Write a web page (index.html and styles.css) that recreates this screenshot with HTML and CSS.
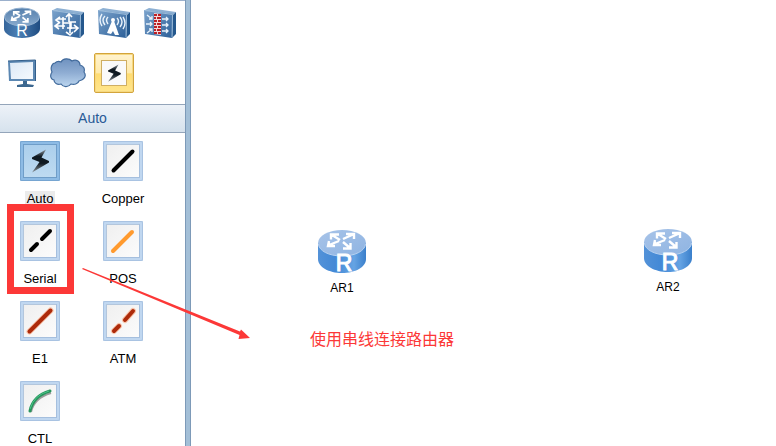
FILE: index.html
```html
<!DOCTYPE html>
<html lang="zh-CN">
<head>
<meta charset="utf-8">
<title>Network topology</title>
<link rel="stylesheet" href="styles.css">
</head>
<body>
<svg class="defs" aria-hidden="true">
  <defs>
    <linearGradient id="dark" x1="0" y1="0" x2="1" y2="1"><stop offset="0" stop-color="#7ba3cc"/><stop offset="1" stop-color="#2c5f98"/></linearGradient>
    <linearGradient id="darkBody" x1="0" y1="0" x2="1" y2="0"><stop offset="0" stop-color="#35659b"/><stop offset=".4" stop-color="#4c80b5"/><stop offset="1" stop-color="#1f4c81"/></linearGradient>
    <linearGradient id="darkTop" x1="0" y1="0" x2="0" y2="1"><stop offset="0" stop-color="#557fac"/><stop offset="1" stop-color="#89abce"/></linearGradient>
    <linearGradient id="body" x1="0" y1="0" x2="1" y2="0"><stop offset="0" stop-color="#5392d8"/><stop offset=".35" stop-color="#4389d6"/><stop offset=".75" stop-color="#65a3e3"/><stop offset="1" stop-color="#3a7fcb"/></linearGradient>
    <linearGradient id="top" x1="0" y1="0" x2="1" y2="1"><stop offset="0" stop-color="#a7c3e8"/><stop offset="1" stop-color="#8fb4e2"/></linearGradient>
    <linearGradient id="cloud" x1="0" y1="0" x2="0" y2="1"><stop offset="0" stop-color="#6f92bf"/><stop offset=".5" stop-color="#8fadd3"/><stop offset="1" stop-color="#bcd6ef"/></linearGradient>
    <linearGradient id="screen" x1="0" y1="0" x2="1" y2="1"><stop offset="0" stop-color="#dce9f7"/><stop offset="1" stop-color="#f5f9fd"/></linearGradient>
    <linearGradient id="bolt" x1="0" y1="0" x2="0" y2="1"><stop offset="0" stop-color="#8b949b"/><stop offset=".3" stop-color="#101a22"/><stop offset=".6" stop-color="#101a22"/><stop offset="1" stop-color="#8b949b"/></linearGradient>
    <symbol id="arrows" viewBox="8 2 30 18">
      <path d="M22 10 14 5M13 9.500V4.500H21M25 9 35 4.500M28 4H36V9M21 11 11 15M11 11 10 16H17M25 12 32 18M25 18.500H32.500V13" fill="none" stroke="#fff" stroke-width="2.400"/>
    </symbol>
    <symbol id="router" viewBox="0 0 48 44">
      <path d="M0 14v16c0 8 10.700 14 24 14s24-6 24-14V14z" fill="url(#body)"/>
      <ellipse cx="24" cy="14" rx="24" ry="13" fill="url(#top)"/>
      <path d="M.5 15C1 22 11 27 24 27s23-5 23.500-12" fill="none" stroke="#b7d1f0" stroke-width="1"/>
      <use href="#arrows" x="8" y="3" width="30" height="18"/>
      <text x="26" y="42" class="router-letter">R</text>
    </symbol>
    <symbol id="plate" viewBox="0 0 32 32">
      <path d="M1 3 5 1 32 5 29 8z" fill="#8db0d3"/>
      <path d="m29 8 3-3v22l-4 4z" fill="#25588d"/>
      <path d="M0 3 29 7 28 31 1 27z" fill="url(#dark)"/>
      <path d="M.5 3.500 28.500 7.500 28 30.500" fill="none" stroke="#9bbbd9" stroke-width="1"/>
    </symbol>
    <symbol id="boltMark" viewBox="0 0 18 24">
      <path d="M15 .5 1 8.500V10L8.500 13 1 23.500 18 13.500V12L10.500 8.500z" fill="url(#bolt)"/>
    </symbol>
  </defs>
</svg>

<main class="app">
  <aside class="sidebar">
    <nav class="categories" aria-label="Device categories">
      <button class="category" aria-label="Router">
        <svg width="36" height="32" viewBox="0 0 36 32">
          <path d="M0 10v12c0 5 8 9 18 9s18-4 18-9V10z" fill="url(#darkBody)"/>
          <ellipse cx="18" cy="10" rx="17.500" ry="9" fill="url(#darkTop)" stroke="#93b1d0" stroke-width="1"/>
          <use href="#arrows" x="6" y="3" width="22" height="13"/>
          <text x="18" y="29" class="router-letter-small">R</text>
        </svg>
      </button>
      <button class="category" aria-label="Switch">
        <svg width="32" height="32" viewBox="0 0 32 32">
          <use href="#plate" width="32" height="32"/>
          <path d="M11 22V10M6 12h8M18 26V15h6M11 16h8v6M4 19h9M15 21h11M14 10l3-3 3 3M8 10 4 13 8 16M7 16 3 19 7 22M17 15V8M22 18l4 3-4 4M14 25l4 3 3-3" fill="none" stroke="#fff" stroke-width="1.600"/>
        </svg>
      </button>
      <button class="category" aria-label="WLAN">
        <svg width="32" height="32" viewBox="0 0 32 32">
          <use href="#plate" width="32" height="32"/>
          <path d="m14 14-5 12 4 1 2-3 2 4h4l-5-14z" fill="#fff"/><circle cx="15" cy="13" r="2" fill="#fff"/>
          <path d="M10 10q-3 3 0 7M7 9q-4 4 0 9M4 7q-4 6 0 12M19 11q3 3 0 7M22 10q4 5 0 10M25 10q4 6 0 12" fill="none" stroke="#e9f2fa" stroke-width="1.400"/>
        </svg>
      </button>
      <button class="category" aria-label="Firewall">
        <svg width="32" height="32" viewBox="0 0 32 32">
          <use href="#plate" width="32" height="32"/>
          <path d="m10 6 7 1v21l-7-1z" fill="#f4d9d9"/>
          <path d="M10 8h3m1 0h3M10 11h2m1 0h4M10 14h3m1 0h3M10 17h2m1 0h4M10 20h3m1 0h3M10 23h2m1 0h4M10 26h3m1 0h3" stroke="#bd2025" stroke-width="2"/>
          <path d="m3 8 5 4M8 9v3H5M2 17h6M6 15l2 2-2 2M3 26l5-4M5 22h3v3M18 12h6M22 10l2 2-2 2M18 18h6M22 16l2 2-2 2M18 24h6M22 22l2 2-2 2" fill="none" stroke="#e9f2fa" stroke-width="1.300"/>
        </svg>
      </button>
      <button class="category" aria-label="Terminal">
        <svg width="30" height="30" viewBox="0 0 30 30">
          <path d="M1 3 29 2v21L2 23z" fill="#5b87b2"/>
          <path d="M1 3 28.500 2v21" fill="none" stroke="#335f8c" stroke-width="1"/>
          <path d="M3 5 26 4v17L4 21z" fill="url(#screen)"/>
          <path d="m16 23 4 0 0 3 7 1-1 2H10l0-2 6-1z" fill="#3c678f"/>
        </svg>
      </button>
      <button class="category" aria-label="Cloud">
        <svg width="36" height="32" viewBox="0 0 36 32">
          <path d="M11 5C13 1 19 1 22 4c4-2 8 0 8 4 4 1 5 4 4 7 3 4 0 8-5 9-1 3-5 4-8 3-3 4-8 3-10 0-4 1-7-1-7-4-4-1-4-5-2-8C0 11 2 6 5 6c2-2 4-2 6-1z" fill="url(#cloud)" stroke="#426b9c" stroke-width="1.200"/>
        </svg>
      </button>
      <button class="category category-active" aria-label="Connections">
        <span class="bolt-tile"><svg width="14" height="18"><use href="#boltMark" width="14" height="18"/></svg></span>
      </button>
    </nav>

    <h2 class="section-title">Auto</h2>

    <div class="cables">
      <button class="cable cable-selected"><span class="tile"><svg width="40" height="40"><use href="#boltMark" x="11" y="8" width="18" height="24"/></svg></span><span class="cable-label">Auto</span></button>
      <button class="cable"><span class="tile"><svg width="40" height="40"><path d="M10.500 29.500 29.500 10.500" stroke="#000" stroke-width="4" stroke-linecap="round"/></svg></span><span class="cable-label">Copper</span></button>
      <button class="cable cable-marked"><span class="tile"><svg width="40" height="40"><path d="m11 29 6-6M22 18l8-8" stroke="#000" stroke-width="4" stroke-linecap="round"/></svg></span><span class="cable-label">Serial</span></button>
      <button class="cable"><span class="tile"><svg width="40" height="40"><path d="m10 30 19-19" stroke="#ff9a2e" stroke-width="4" stroke-linecap="round"/></svg></span><span class="cable-label">POS</span></button>
      <button class="cable"><span class="tile"><svg width="40" height="40"><path d="M9.500 30.500 30.500 9.500" stroke="#f9c4aa" stroke-width="6" stroke-linecap="round"/><path d="M9.500 30.500 30.500 9.500" stroke="#ad2b0b" stroke-width="4" stroke-linecap="round"/></svg></span><span class="cable-label">E1</span></button>
      <button class="cable"><span class="tile"><svg width="40" height="40"><path d="m11 30 5-5M22 19l8-9" stroke="#f9c4aa" stroke-width="6" stroke-linecap="round"/><path d="m11 30 5-5M22 19l8-9" stroke="#ad2b0b" stroke-width="4" stroke-linecap="round"/></svg></span><span class="cable-label">ATM</span></button>
      <button class="cable"><span class="tile"><svg width="40" height="40"><path d="M11 31Q14 17 31 12" fill="none" stroke="#9c9c9c" stroke-width="2"/><path d="M10 30Q13 15 30 10" fill="none" stroke="#28945c" stroke-width="3" stroke-linecap="round"/><path d="M10 28Q14 14 29 10" fill="none" stroke="#4cc58a" stroke-width="1"/></svg></span><span class="cable-label">CTL</span></button>
    </div>
  </aside>
  <div class="splitter"></div>
  <section class="canvas">
    <div class="node node-ar1"><svg width="48" height="44"><use href="#router" width="48" height="44"/></svg><span>AR1</span></div>
    <div class="node node-ar2"><svg width="48" height="44"><use href="#router" width="48" height="44"/></svg><span>AR2</span></div>
    <p class="note">使用串线连接路由器</p>
  </section>
  <svg class="pointer" width="170" height="72" viewBox="0 0 170 72" aria-hidden="true">
    <path d="M0 1 1 0 158 63.500 159 61.500 168 70 156.500 71 157.500 67z" fill="#fc3837"/>
  </svg>
</main>
</body>
</html>
```

FILE: styles.css
```css
* {
  box-sizing: border-box;
}

body {
  margin: 0;
  background: #fff;
  color: #000;
  font-family: "Liberation Sans", "Noto Sans CJK SC", sans-serif;
  font-size: 13px;
}

button {
  margin: 0;
  padding: 0;
  border: 0;
  background: none;
  color: inherit;
  font: inherit;
}

svg {
  display: block;
}

.defs {
  position: absolute;
  width: 0;
  height: 0;
}

.app {
  position: relative;
  display: flex;
  min-height: 100vh;
}

.sidebar {
  flex: none;
  width: 185px;
  border-top: 1px solid #9bb0cc;
}

.splitter {
  flex: none;
  width: 6px;
  border: 1px solid #7d9ab8;
  border-width: 0 1px;
  background: #a3bfd7;
}

.categories {
  display: grid;
  grid-template-columns: repeat(4, 40px);
  grid-auto-rows: 40px;
  gap: 10px 6px;
  padding: 2px 2px 11px;
}

.category {
  display: grid;
  place-items: center;
}

.category-active {
  border: 1px solid #d3a43b;
  border-radius: 2px;
  background: linear-gradient(#fff3cf, #ffeaaa 50%, #ffdc72 52%, #ffe58c);
  box-shadow: inset 0 0 0 1px #f5d882;
}

.bolt-tile {
  display: grid;
  place-items: center;
  width: 26px;
  height: 26px;
  border: 1px solid #cfae62;
  background: #fafafa;
}

.section-title {
  margin: 0;
  border: 1px solid #94a5ba;
  border-width: 1px 0;
  background: linear-gradient(#edf2f8, #d6e2ed);
  color: #285a96;
  font-size: 14px;
  font-weight: 400;
  line-height: 27px;
  text-align: center;
}

.cables {
  display: grid;
  grid-template-columns: repeat(2, 64px);
  gap: 15px 19px;
  padding: 8px 8px 0;
}

.cable {
  position: relative;
  display: flex;
  flex-direction: column;
  align-items: center;
  gap: 10px;
}

.tile {
  border-radius: 2px;
  background: linear-gradient(135deg, #eeeeee, #fdfdfd);
  box-shadow: inset 0 0 0 1px #a9c3e2, inset 0 0 0 3px #c0d7f0, inset -1px -1px 0 3px #a5bfde, inset 0 0 0 4px #b3c6dc;
}

.cable-selected .tile {
  background: linear-gradient(#a9cdeb, #c0dcf2);
  box-shadow: inset 0 0 0 1px #76a5d1, inset 0 0 0 3px #8dbbe5, inset 0 0 0 4px #6f9dc8;
}

.cable-label {
  line-height: 15px;
}

.cable-selected .cable-label {
  padding: 0 2px;
  background: #ebebeb;
}

.cable-marked::after {
  content: "";
  position: absolute;
  inset: -17px -2px -8px -1px;
  border: 7px solid #fc3837;
}

.canvas {
  position: relative;
  flex: 1;
}

.node {
  position: absolute;
  display: flex;
  flex-direction: column;
  align-items: center;
  gap: 8px;
  font-size: 12px;
  line-height: 14px;
}

.node-ar1 {
  left: 127px;
  top: 229px;
}

.node-ar2 {
  left: 453px;
  top: 228px;
}

.note {
  position: absolute;
  left: 119px;
  top: 326px;
  margin: 0;
  color: #fc3837;
  font-family: "Noto Sans CJK SC", sans-serif;
  font-size: 16px;
  line-height: 24px;
  white-space: nowrap;
}

.pointer {
  position: absolute;
  left: 82px;
  top: 268px;
}

.router-letter,
.router-letter-small {
  fill: #fff;
  stroke: #fff;
  font-family: "Liberation Sans", sans-serif;
  text-anchor: middle;
}

.router-letter {
  stroke-width: 1px;
  font-size: 23px;
}

.router-letter-small {
  stroke-width: 0;
  font-size: 16px;
}
```
